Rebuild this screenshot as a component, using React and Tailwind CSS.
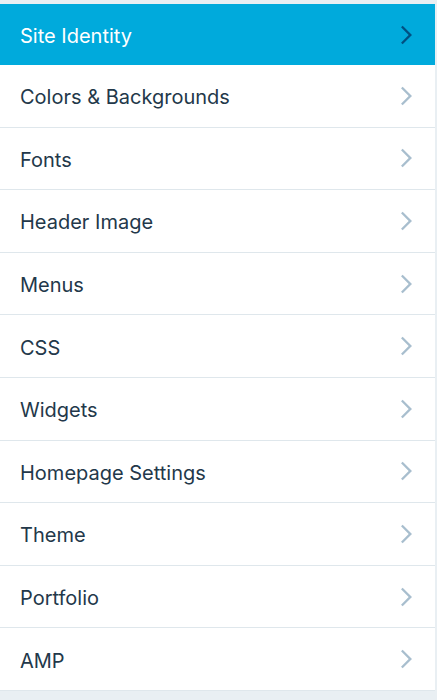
const items = [
  "Site Identity",
  "Colors & Backgrounds",
  "Fonts",
  "Header Image",
  "Menus",
  "CSS",
  "Widgets",
  "Homepage Settings",
  "Theme",
  "Portfolio",
  "AMP",
];

function Chevron({ className }) {
  return (
    <svg viewBox="0 0 24 24" width="28" height="28" className={className}>
      <path
        fill="currentColor"
        d="M10 20l8-8-8-8-1.414 1.414L15.172 12l-6.586 6.586z"
      />
    </svg>
  );
}

export default function App() {
  return (
    <div
      className="min-h-[700px] bg-[#e9eff3] pt-[4px]"
      style={{ fontFamily: "Inter, 'Noto Sans', sans-serif" }}
    >
      <ul className="w-[435px]">
        {items.map((label, i) => {
          const active = i === 0;
          return (
            <li
              key={label}
              className={
                active
                  ? "flex h-[61px] items-center justify-between bg-[#00aadc] pl-[20px] pr-[16px] text-white"
                  : "flex h-[62.6px] items-center justify-between border-b border-[#dfe7ec] bg-white pl-[20px] pr-[16px] text-[#23384a]"
              }
            >
              <span className="pt-[3px] text-[20px] leading-none">{label}</span>
              <Chevron
                className={active ? "text-[#005082]" : "text-[#a8bece]"}
              />
            </li>
          );
        })}
      </ul>
    </div>
  );
}
